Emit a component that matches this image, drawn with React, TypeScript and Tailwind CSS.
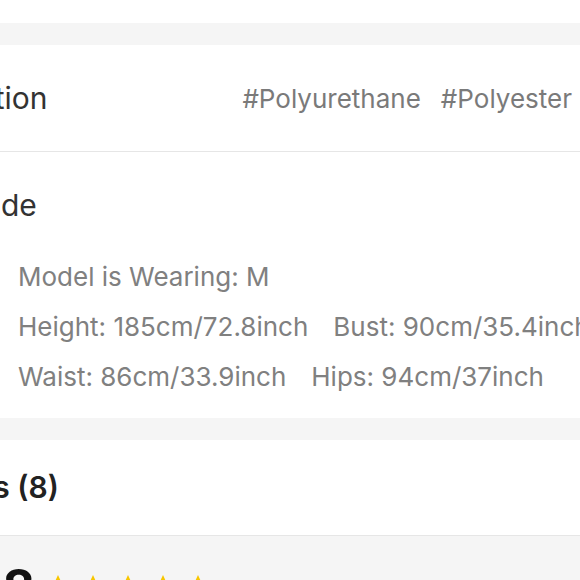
import React from "react";

const Star = () => (
  <svg viewBox="0 0 24 24" className="w-[28px] h-[28px] shrink-0" fill="#f7c600">
    <path d="M12 1.8l3.1 6.6 7.2.9-5.3 5 1.4 7.1L12 17.9l-6.4 3.5 1.4-7.1-5.3-5 7.2-.9z" />
  </svg>
);

export default function App() {
  const model = [
    ["Model is Wearing: M"],
    ["Height: 185cm/72.8inch", "Bust: 90cm/35.4inch"],
    ["Waist: 86cm/33.9inch", "Hips: 94cm/37inch"],
  ];
  return (
    <div className="w-[580px] h-[580px] overflow-hidden bg-[#f5f5f5] font-['Inter',sans-serif]">
      <div className="h-[23px] bg-white" />
      <div className="h-[22px]" />

      {/* Composition */}
      <div className="h-[107px] bg-white border-b border-[#e6e6e6] flex items-center justify-between whitespace-nowrap">
        <div className="-ml-[131px] text-[30px] text-[#333]">Composition</div>
        <div className="flex gap-[20px] pr-[8px] text-[26px] text-[#7a7a7a]">
          <span>#Polyurethane</span>
          <span>#Polyester</span>
        </div>
      </div>

      {/* Size guide */}
      <div className="h-[266px] bg-white whitespace-nowrap">
        <div className="pt-[35px] -ml-[115px] text-[30px] leading-[36px] text-[#333]">Size Guide</div>
        <div className="pl-[18px] pt-[37px] flex flex-col gap-[16px] text-[26px] leading-[34px] text-[#808080]">
          {model.map((row, i) => (
            <div key={i} className="flex gap-[25px]">
              {row.map((t) => (
                <span key={t}>{t}</span>
              ))}
            </div>
          ))}
        </div>
      </div>

      <div className="h-[22px]" />

      {/* Reviews */}
      <div className="h-[96px] bg-white border-b border-[#e6e6e6] flex items-center whitespace-nowrap">
        <div className="-ml-[111px] text-[30px] font-semibold text-[#222]">Reviews (8)</div>
      </div>

      <div className="flex items-start gap-[9px] pt-[25px] whitespace-nowrap">
        <div className="-ml-[45px] text-[50px] leading-[52px] font-bold text-[#111]">4.8</div>
        <div className="flex gap-[7px] pt-[12px]">
          <Star />
          <Star />
          <Star />
          <Star />
          <Star />
        </div>
      </div>
    </div>
  );
}
